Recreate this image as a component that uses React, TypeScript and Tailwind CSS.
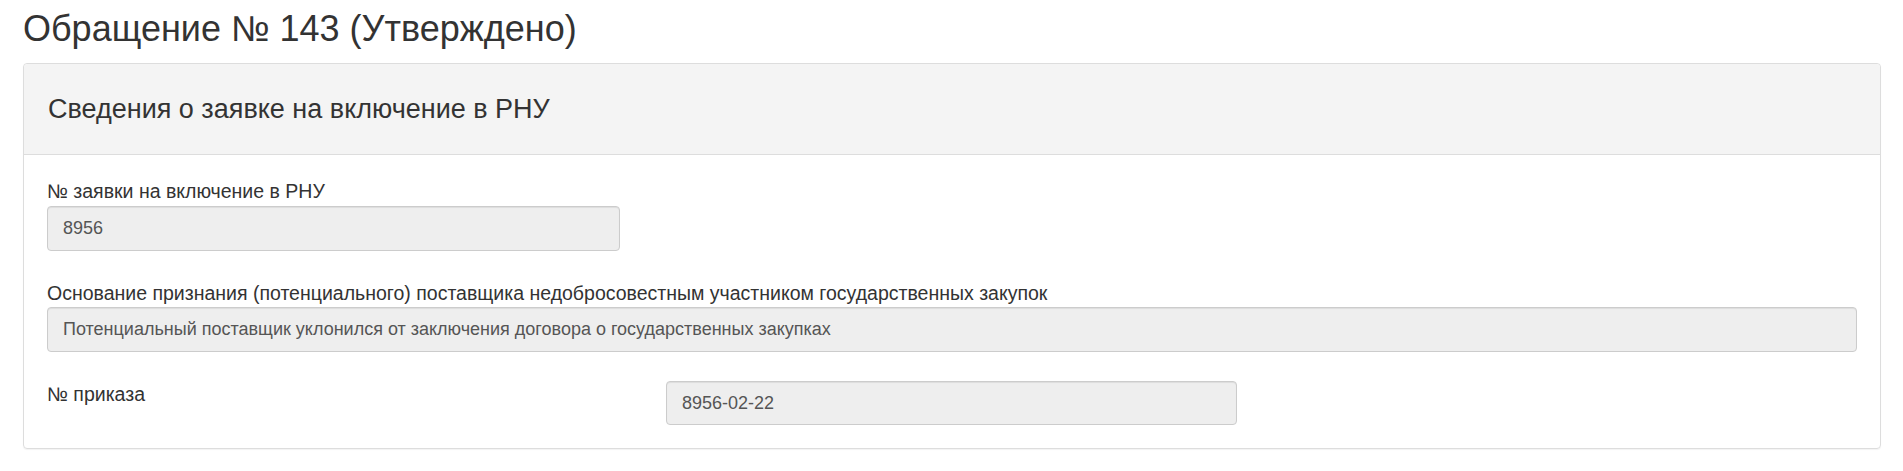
const fields = {
  requestNo: "8956",
  reason: "Потенциальный поставщик уклонился от заключения договора о государственных закупках",
  orderNo: "8956-02-22",
};

const ReadonlyInput = ({ value, className }: { value: string; className: string }) => (
  <div
    className={`flex items-center px-[15px] bg-[#eeeeee] border border-[#cccccc] rounded-[4px] text-[18px] text-[#555555] shadow-[inset_0_1px_1px_rgba(0,0,0,0.075)] ${className}`}
  >
    {value}
  </div>
);

const App = () => {
  return (
    <div className="w-full min-h-[471px] bg-white px-[23px] pt-[9px] text-[#333333] font-['Liberation_Sans',Arial,sans-serif]">
      <h1 className="text-[36px] leading-[40px] font-normal mb-[14px]">Обращение № 143 (Утверждено)</h1>

      <div className="w-[1858px] border border-[#dddddd] rounded-[4px] shadow-[0_1px_1px_rgba(0,0,0,0.05)]">
        {/* Header */}
        <div className="h-[91px] pt-[29px] px-[24px] bg-[#f4f4f4] border-b border-[#dddddd] rounded-t-[4px]">
          <h3 className="text-[27px] leading-[32px] font-normal">Сведения о заявке на включение в РНУ</h3>
        </div>

        {/* Body */}
        <div className="px-[23px] pt-[23px] pb-[23px] flex flex-col">
          <div className="flex flex-col">
            <label className="text-[19.5px] leading-[26px] mb-[2px]">№ заявки на включение в РНУ</label>
            <ReadonlyInput value={fields.requestNo} className="w-[573px] h-[45px]" />
          </div>

          <div className="flex flex-col mt-[29px]">
            <label className="text-[19.5px] leading-[26px] mb-[1px]">
              Основание признания (потенциального) поставщика недобросовестным участником государственных закупок
            </label>
            <ReadonlyInput value={fields.reason} className="w-full h-[45px]" />
          </div>

          <div className="flex mt-[29px]">
            <label className="w-[619px] text-[19.5px] leading-[26px]">№ приказа</label>
            <ReadonlyInput value={fields.orderNo} className="w-[571px] h-[44px]" />
          </div>
        </div>
      </div>
    </div>
  );
};

export default App;
